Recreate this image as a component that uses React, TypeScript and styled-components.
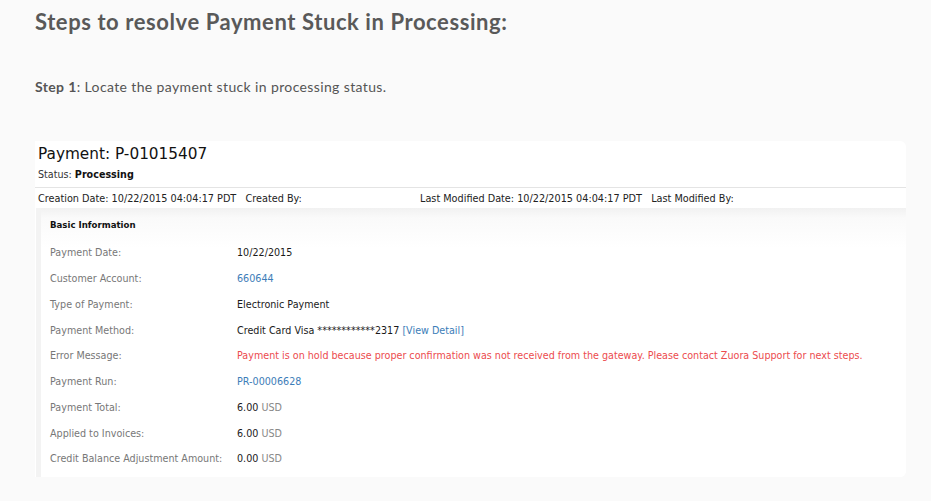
import React from "react";
import styled, { createGlobalStyle } from "styled-components";

const Global = createGlobalStyle`
  html, body { margin: 0; padding: 0; background: #fafafa; }
  body { font-family: Lato, "Open Sans", sans-serif; }
`;

const Page = styled.div`
  padding: 6px 25px 0 35px;
  width: 931px;
  height: 501px;
  box-sizing: border-box;
  overflow: hidden;
`;

const Heading = styled.h2`
  margin: 0;
  font-family: Lato, sans-serif;
  font-weight: 700;
  font-size: 22px;
  line-height: 31px;
  color: #595959;
  letter-spacing: 0.58px;
`;

const StepText = styled.p`
  margin: 41px 0 0 0;
  font-family: Lato, sans-serif;
  font-size: 14px;
  line-height: 18px;
  color: #555;
  letter-spacing: 0.37px;
  strong { font-weight: 700; }
`;

const Shot = styled.div`
  margin-top: 45px;
  width: 871px;
  height: 336px;
  background: #fff;
  border-radius: 0 6px 6px 0;
  font-family: "DejaVu Sans", Verdana, sans-serif;
  color: #222;
  display: flex;
  flex-direction: column;
  overflow: hidden;
`;

const Title = styled.div`
  padding: 2px 0 0 3px;
  font-size: 15.3px;
  line-height: 22px;
  color: #111;
`;

const Status = styled.div`
  padding: 2px 0 0 3px;
  font-size: 9.6px;
  line-height: 16px;
  color: #333;
  b { color: #111; }
`;

const MetaBar = styled.div`
  margin-top: 4px;
  border-top: 1px solid #e4e4e4;
  display: flex;
  padding: 0 0 0 3px;
  height: 20px;
  align-items: center;
  font-size: 9.7px;
  color: #222;
`;

const MetaItem = styled.span<{ $w?: number }>`
  white-space: pre;
  flex: 0 0 ${(p) => (p.$w ? `${p.$w}px` : "auto")};
`;

const Panel = styled.div`
  flex: 1;
  margin-left: 1px;
  border-left: 5px solid #f3f3f3;
  background: linear-gradient(#f1f1f1 0px, #fafafa 10px, #fff 40px);
  padding: 10px 0 0 9px;
`;

const PanelTitle = styled.div`
  font-size: 8.6px;
  font-weight: 700;
  line-height: 14px;
  color: #111;
  margin-bottom: 8px;
`;

const Row = styled.div`
  display: grid;
  grid-template-columns: 187px 1fr;
  height: 25.75px;
  align-items: center;
  font-size: 9.6px;
`;

const Label = styled.span`
  color: #777;
`;

const Value = styled.span<{ $tone?: "link" | "error" }>`
  color: ${(p) =>
    p.$tone === "link" ? "#3c7db8" : p.$tone === "error" ? "#ec4b4e" : "#1a1a1a"};
  white-space: nowrap;
`;

const Link = styled.span`
  color: #3c7db8;
`;

const Unit = styled.span`
  color: #888;
`;

const rows: { label: string; value: React.ReactNode; tone?: "link" | "error" }[] = [
  { label: "Payment Date:", value: "10/22/2015" },
  { label: "Customer Account:", value: "660644", tone: "link" },
  { label: "Type of Payment:", value: "Electronic Payment" },
  {
    label: "Payment Method:",
    value: (
      <>
        Credit Card Visa ************2317 <Link>[View Detail]</Link>
      </>
    ),
  },
  {
    label: "Error Message:",
    value:
      "Payment is on hold because proper confirmation was not received from the gateway. Please contact Zuora Support for next steps.",
    tone: "error",
  },
  { label: "Payment Run:", value: "PR-00006628", tone: "link" },
  { label: "Payment Total:", value: <>6.00 <Unit>USD</Unit></> },
  { label: "Applied to Invoices:", value: <>6.00 <Unit>USD</Unit></> },
  { label: "Credit Balance Adjustment Amount:", value: <>0.00 <Unit>USD</Unit></> },
];

export default function App() {
  return (
    <>
      <Global />
      <Page>
        <Heading>Steps to resolve Payment Stuck in Processing:</Heading>
        <StepText>
          <strong>Step 1</strong>: Locate the payment stuck in processing status.
        </StepText>
        <Shot>
          <Title>Payment: P-01015407</Title>
          <Status>
            Status: <b>Processing</b>
          </Status>
          <MetaBar>
            <MetaItem $w={382}>{"Creation Date: 10/22/2015 04:04:17 PDT   Created By:"}</MetaItem>
            <MetaItem>{"Last Modified Date: 10/22/2015 04:04:17 PDT   Last Modified By:"}</MetaItem>
          </MetaBar>
          <Panel>
            <PanelTitle>Basic Information</PanelTitle>
            {rows.map((r) => (
              <Row key={r.label}>
                <Label>{r.label}</Label>
                <Value $tone={r.tone}>{r.value}</Value>
              </Row>
            ))}
          </Panel>
        </Shot>
      </Page>
    </>
  );
}
